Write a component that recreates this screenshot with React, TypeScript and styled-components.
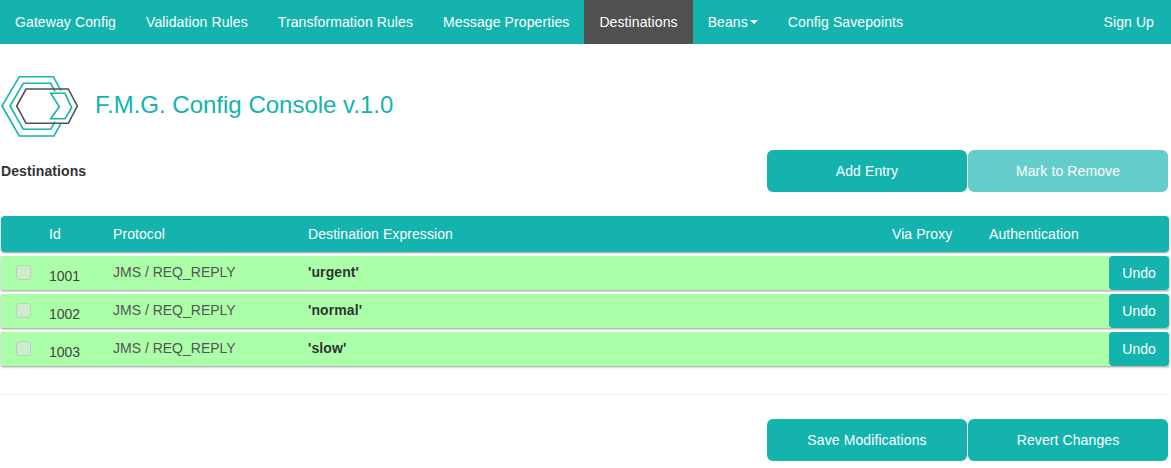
import React from 'react';
import styled, { createGlobalStyle } from 'styled-components';

const GlobalStyle = createGlobalStyle`
  html, body {
    margin: 0;
    padding: 0;
    background: #fff;
    font-family: "Liberation Sans", Arial, sans-serif;
    font-size: 14px;
    color: #333;
  }
`;

const Navbar = styled.nav`
  display: flex;
  height: 44px;
  background-color: #14b3ae;
`;

const NavItem = styled.a<{ $active?: boolean }>`
  display: flex;
  align-items: center;
  height: 44px;
  padding: 0 15px;
  color: #fff;
  font-size: 14px;
  letter-spacing: 0.1px;
  background-color: ${(p) => (p.$active ? '#505050' : 'transparent')};
`;

const NavRight = styled(NavItem)`
  margin-left: auto;
  padding-right: 17px;
`;

const Caret = styled.span`
  width: 0;
  height: 0;
  margin-left: 2px;
  border-top: 4px solid #fff;
  border-left: 4px solid transparent;
  border-right: 4px solid transparent;
`;

const Page = styled.main`
  width: 1168px;
  padding-left: 1px;
`;

const Header = styled.header`
  display: flex;
  align-items: center;
  height: 62px;
  margin-top: 32px;
  gap: 15px;
  padding-left: 1px;
`;

const Title = styled.h1`
  margin: 0 0 4px;
  font-size: 24px;
  font-weight: 400;
  color: #14b3ae;
`;

const ToolRow = styled.div`
  display: flex;
  align-items: center;
  justify-content: space-between;
  margin-top: 12px;
  padding-right: 1px;
`;

const SectionName = styled.h2`
  margin: 0;
  font-size: 14px;
  font-weight: 700;
  letter-spacing: 0.1px;
  color: #333;
`;

const ButtonGroup = styled.div`
  display: flex;
  gap: 1px;
  justify-content: flex-end;
`;

const ActionButton = styled.button<{ $disabled?: boolean }>`
  width: 200px;
  height: 42px;
  padding: 0;
  border: none;
  border-radius: 6px;
  font-family: inherit;
  font-size: 14px;
  letter-spacing: 0.1px;
  color: #fff;
  background-color: #14b3ae;
  opacity: ${(p) => (p.$disabled ? 0.65 : 1)};
`;

const Table = styled.section`
  margin-top: 24px;
  display: flex;
  flex-direction: column;
  gap: 4px;
`;

const columns = '48px 64px 195px 584px 97px 1fr 60px';

const HeadRow = styled.div`
  display: grid;
  grid-template-columns: ${columns};
  align-items: center;
  height: 36px;
  border-radius: 4px;
  background-color: #14b3ae;
  color: #fff;
  font-size: 14px;
  letter-spacing: 0.08px;
  box-shadow: 0 1px 2px rgba(0, 0, 0, 0.4);
`;

const DataRow = styled.div`
  display: grid;
  grid-template-columns: ${columns};
  height: 34px;
  background-color: #abffa8;
  box-shadow: 0 1px 2px rgba(0, 0, 0, 0.4);
  font-size: 14px;
  color: #444;
`;

const CheckCell = styled.div`
  padding: 9px 0 0 15px;
`;

const CheckBox = styled.span`
  display: block;
  width: 13px;
  height: 13px;
  border: 1px solid #b9d3b9;
  border-radius: 3px;
  background-color: #cdeccd;
`;

const IdCell = styled.div`
  padding-top: 12px;
  color: #444;
`;

const Cell = styled.div`
  padding-top: 8px;
  font-size: 14px;
  color: #555;
`;

const Expression = styled(Cell)`
  font-weight: 700;
  color: #333;
  letter-spacing: 0.1px;
`;

const UndoButton = styled.button`
  grid-column: 7;
  width: 60px;
  height: 34px;
  padding: 0;
  border: none;
  border-radius: 4px;
  font-family: inherit;
  font-size: 14px;
  color: #fff;
  background-color: #14b3ae;
`;

const Divider = styled.hr`
  margin: 28px 0 24px -1px;
  border: none;
  border-top: 1px solid #eee;
`;

const FooterActions = styled(ButtonGroup)`
  padding-right: 1px;
`;

const Logo = () => (
  <svg width="78" height="62" viewBox="0 0 78 62" fill="none" strokeWidth="1.6" overflow="visible">
    <path d="M59 14.7 L51.3 0.7 L17.3 0.7 L0 30 L17.3 60 L52 60 L59 47.3" stroke="#14b3ae" />
    <path d="M53 15.7 L48.7 7.3 L21.3 7.3 L8 30 L21.3 53.3 L48.7 53.3 L53 45.7" stroke="#14b3ae" />
    <path d="M14.7 30 L24 13 L66.3 13 L75.3 30 L66.3 47.3 L24 47.3 Z" stroke="#505050" />
    <path d="M48.7 17.3 L63 17.3 L69.7 31.7 L63 42.7 L48.7 42.7 L57.3 30.7 Z" stroke="#14b3ae" />
  </svg>
);

const rows = [
  { id: 1001, expression: "'urgent'" },
  { id: 1002, expression: "'normal'" },
  { id: 1003, expression: "'slow'" },
];

const App: React.FC = () => (
  <>
    <GlobalStyle />
    <Navbar>
      <NavItem>Gateway Config</NavItem>
      <NavItem>Validation Rules</NavItem>
      <NavItem>Transformation Rules</NavItem>
      <NavItem>Message Properties</NavItem>
      <NavItem $active>Destinations</NavItem>
      <NavItem>
        Beans<Caret />
      </NavItem>
      <NavItem>Config Savepoints</NavItem>
      <NavRight>Sign Up</NavRight>
    </Navbar>
    <Page>
      <Header>
        <Logo />
        <Title>F.M.G. Config Console v.1.0</Title>
      </Header>
      <ToolRow>
        <SectionName>Destinations</SectionName>
        <ButtonGroup>
          <ActionButton>Add Entry</ActionButton>
          <ActionButton $disabled>Mark to Remove</ActionButton>
        </ButtonGroup>
      </ToolRow>
      <Table>
        <HeadRow>
          <span />
          <span>Id</span>
          <span>Protocol</span>
          <span>Destination Expression</span>
          <span>Via Proxy</span>
          <span>Authentication</span>
        </HeadRow>
        {rows.map((row) => (
          <DataRow key={row.id}>
            <CheckCell>
              <CheckBox />
            </CheckCell>
            <IdCell>{row.id}</IdCell>
            <Cell>JMS / REQ_REPLY</Cell>
            <Expression>{row.expression}</Expression>
            <UndoButton>Undo</UndoButton>
          </DataRow>
        ))}
      </Table>
      <Divider />
      <FooterActions>
        <ActionButton>Save Modifications</ActionButton>
        <ActionButton>Revert Changes</ActionButton>
      </FooterActions>
    </Page>
  </>
);

export default App;
